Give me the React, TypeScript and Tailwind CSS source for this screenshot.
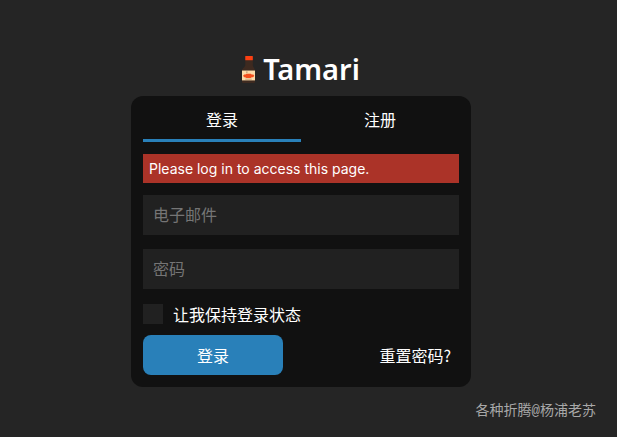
const CJK = 'font-["Noto_Sans_CJK_SC",sans-serif]';

function BottleIcon() {
  return (
    <svg className="h-[27px] w-[13px] shrink-0" viewBox="0 0 12 26" preserveAspectRatio="none" aria-hidden="true">
      <path d="M3 4h7v4.500c0 3 2 3 2 6V25q0 1-1 1H1q-1 0-1-1V14.500c0-3 3-3 3-6z" fill="#3e2a20" />
      <rect x="3" y="0" width="7" height="4" rx="0.500" fill="#fb4012" />
      <rect x="0" y="14" width="12" height="9.500" fill="#fcdcaa" />
      <path d="M4 17h4l1 .8h1.500l.8 1.200-1 1.500H9l-1 .6H4l-1.200-.6H2L1 19l1-1.200h1.200z" fill="#f4501e" />
      <rect x="4" y="15" width="1" height="1" fill="#8a6a4c" />
      <path d="M3 22.300h6" stroke="#c09a72" strokeWidth="0.800" />
    </svg>
  );
}

export default function App() {
  return (
    <div className={`flex min-h-screen flex-col bg-[#252525] text-base text-white ${CJK}`}>
      <main className="flex w-full flex-col items-center pt-[50px] pr-[15px]">
        <h1 className='flex h-[46px] items-center gap-2 pb-2 font-["Noto_Sans",sans-serif] text-[29px] leading-[38px] font-semibold'>
          <BottleIcon />
          Tamari
        </h1>
        <section className="w-full max-w-[340px] rounded-xl bg-[#111111] px-3 pb-3">
          <nav className="mb-3 grid grid-cols-2">
            <button type="button" className="h-[46px] border-b-3 border-[#2980b9] pt-0.5">
              登录
            </button>
            <button type="button" className="h-[46px] border-b-3 border-transparent pt-0.5">
              注册
            </button>
          </nav>
          <p role="alert" className='mb-3 bg-[#ab3328] px-1.5 py-1 font-["Inter",sans-serif] text-sm leading-[21px]'>
            Please log in to access this page.
          </p>
          <form className="flex flex-col" onSubmit={(event) => event.preventDefault()}>
            <input
              type="email"
              aria-label="电子邮件"
              placeholder="电子邮件"
              className="mb-3.5 h-10 w-full bg-[#212121] px-2.5 pb-0.5 outline-none placeholder:text-[#757575]"
            />
            <input
              type="password"
              aria-label="密码"
              placeholder="密码"
              className="mb-[15px] h-10 w-full bg-[#212121] px-2.5 pb-0.5 outline-none placeholder:text-[#757575]"
            />
            <label className="mb-[11px] flex items-center gap-2.5 leading-5">
              <input type="checkbox" className="size-5 shrink-0 appearance-none bg-[#212121] checked:bg-[#2980b9]" />
              让我保持登录状态
            </label>
            <div className="flex items-center justify-between pr-2">
              <button type="submit" className="h-10 w-[140px] rounded-lg bg-[#2980b9]">
                登录
              </button>
              <a href="#reset">重置密码?</a>
            </div>
          </form>
        </section>
      </main>
      <footer className='mt-auto pr-[21px] pb-4 text-right font-["Liberation_Mono","Noto_Sans_CJK_SC",monospace] text-sm text-[#a8a8a8]'>
        各种折腾@杨浦老苏
      </footer>
    </div>
  );
}
